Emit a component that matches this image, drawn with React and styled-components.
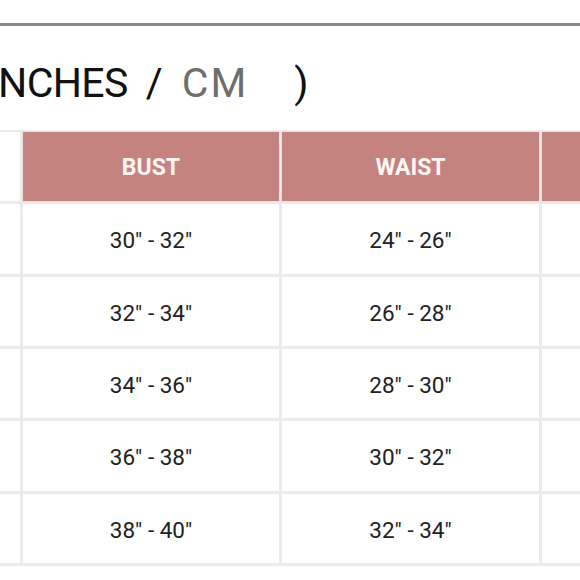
import React from "react";
import styled, { createGlobalStyle } from "styled-components";

const GlobalStyle = createGlobalStyle`
  html, body {
    margin: 0;
    padding: 0;
    background: #ffffff;
    overflow: hidden;
  }
  body {
    font-family: Roboto, "Noto Sans", "Liberation Sans", sans-serif;
  }
`;

const rows = [
  ["30\" - 32\"", "24\" - 26\""],
  ["32\" - 34\"", "26\" - 28\""],
  ["34\" - 36\"", "28\" - 30\""],
  ["36\" - 38\"", "30\" - 32\""],
  ["38\" - 40\"", "32\" - 34\""],
];

function App() {
  return (
    <Page>
      <GlobalStyle />
      <Rule />
      <Heading>
        <Unit>(INCHES</Unit>
        <Slash>/</Slash>
        <Unit muted>CM</Unit>
        <Paren>)</Paren>
      </Heading>
      <Table>
        <Cell />
        <HeadCell>BUST</HeadCell>
        <HeadCell>WAIST</HeadCell>
        <HeadCell />
        {rows.map(([bust, waist]) => (
          <React.Fragment key={bust}>
            <Cell />
            <Cell>{bust}</Cell>
            <Cell>{waist}</Cell>
            <Cell />
          </React.Fragment>
        ))}
      </Table>
    </Page>
  );
}

const Page = styled.div`
  width: 580px;
  height: 580px;
  overflow: hidden;
  padding-top: 23px;
  box-sizing: border-box;
`;

const Rule = styled.div`
  height: 3px;
  background: #8b8b86;
`;

const Heading = styled.div`
  display: flex;
  align-items: baseline;
  margin: 37px 0 0 -26px;
  height: 41px;
  font-size: 41px;
  line-height: 41px;
  color: #111111;
  white-space: nowrap;
`;

const Unit = styled.span`
  color: ${(p) => (p.muted ? "#6e6e6e" : "#111111")};
  letter-spacing: ${(p) => (p.muted ? "2px" : "-0.6px")};
`;

const Slash = styled.span`
  margin: 0 19px 0 18px;
`;

const Paren = styled.span`
  margin-left: 46px;
`;

const Table = styled.div`
  display: grid;
  grid-template-columns: 20px 256px 257px 120px;
  grid-auto-rows: 69.33px;
  gap: 3px;
  width: max-content;
  margin-top: 26px;
  padding: 2px 0 3px;
  background: #ebebeb;
`;

const Cell = styled.div`
  display: flex;
  align-items: center;
  justify-content: center;
  padding-top: 3px;
  background: #ffffff;
  color: #222222;
  font-size: 22.5px;
`;

const HeadCell = styled(Cell)`
  padding-top: 1px;
  background: #c5837f;
  color: #fff6f4;
  font-weight: 700;
  font-size: 23px;
  box-shadow: 0 0 0 1px #f4dedd;
`;

export default App;
